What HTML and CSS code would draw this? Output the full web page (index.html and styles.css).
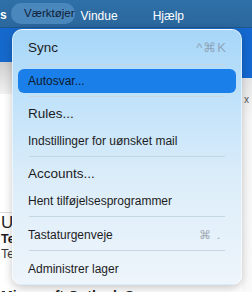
FILE: index.html
```html
<!DOCTYPE html>
<html lang="da">
<head>
    <meta charset="UTF-8">
    <meta name="viewport" content="width=device-width, initial-scale=1.0">
    <title>Værktøjer</title>
    <link rel="stylesheet" href="styles.css">
</head>
<body>
    <div class="app">
        <div class="menubar">
            <span class="mb-item mb-cut">s</span>
            <span class="mb-item mb-active">Værktøjer</span>
            <span class="mb-item mb-window">Vindue</span>
            <span class="mb-item mb-help">Hjælp</span>
        </div>
        <div class="panes">
            <div class="list-pane">
                <div class="list-head"></div>
                <div class="list-tools"></div>
                <div class="list-body">
                    <div class="msg">
                        <div class="msg-group">U</div>
                        <div class="msg-from">Te</div>
                        <div class="msg-subject">Te</div>
                    </div>
                    <div class="msg msg-last">
                        <div class="msg-from">Microsoft Outlook S</div>
                    </div>
                </div>
            </div>
            <div class="read-pane">
                <div class="read-head"></div>
                <div class="read-body">
                    <span class="read-close">x</span>
                </div>
            </div>
        </div>
    </div>

    <div class="menu">
        <div class="item en">Sync <span class="key">^⌘K</span></div>
        <div class="sep"></div>
        <div class="item da selected">Autosvar...</div>
        <div class="sep"></div>
        <div class="item en">Rules...</div>
        <div class="item da">Indstillinger for uønsket mail</div>
        <div class="sep"></div>
        <div class="item en">Accounts...</div>
        <div class="item da">Hent tilføjelsesprogrammer</div>
        <div class="sep"></div>
        <div class="item da">Tastaturgenveje <span class="key key-short">⌘ .</span></div>
        <div class="sep"></div>
        <div class="item da">Administrer lager</div>
    </div>
</body>
</html>
```

FILE: styles.css
```css
html {
    overflow: hidden;
}
body {
    margin: 0;
    padding: 0;
    width: 252px;
    height: 292px;
    overflow: hidden;
    font-family: "Liberation Sans", Arial, sans-serif;
    background-color: #f4f4f4;
}
.app {
    display: flex;
    flex-direction: column;
    height: 292px;
    overflow: hidden;
}
.menubar {
    height: 28px;
    flex-shrink: 0;
    background: linear-gradient(#2f70a8, #2a679d);
    border-bottom: 1px solid #21578a;
    box-sizing: border-box;
    display: flex;
    align-items: center;
    color: white;
    font-size: 12px;
    white-space: nowrap;
}
.mb-item {
    line-height: 20px;
    padding-top: 4px;
}
.mb-cut {
    width: 11px;
    font-weight: bold;
    padding-top: 2px;
}
.mb-active {
    background-color: #4a87bd;
    color: #0e2136;
    font-size: 11.5px;
    border-radius: 10px;
    padding: 0 1px 0 13px;
    height: 21px;
    line-height: 21px;
}
.mb-window {
    margin-left: 5px;
}
.mb-help {
    margin-left: 35px;
}
.panes {
    flex: 1;
    display: flex;
    min-height: 0;
}
.list-pane {
    width: 242px;
    display: flex;
    flex-direction: column;
    background-color: white;
}
.list-head {
    height: 34px;
    background-color: #1669cc;
}
.list-tools {
    height: 32px;
    background: linear-gradient(#cfcfcf, #f2f2f2);
}
.list-body {
    flex: 1;
    min-height: 0;
    overflow: hidden;
    background-color: white;
    padding-top: 118px;
}
.msg {
    border-top: 1px solid #dcdcdc;
    padding: 1px 0 0 1px;
    height: 64px;
    color: #1d1d1d;
}
.msg-group {
    font-size: 17px;
    line-height: 18px;
}
.msg-from {
    font-size: 12.5px;
    font-weight: bold;
    line-height: 15px;
}
.msg-subject {
    font-size: 12.5px;
    line-height: 15px;
    color: #3a3a3a;
}
.msg-last {
    border-top: none;
    padding-top: 10px;
}
.msg-last .msg-from {
    font-size: 14px;
    line-height: 16px;
}
.read-pane {
    flex: 1;
    display: flex;
    flex-direction: column;
}
.read-head {
    height: 50px;
    background-color: #1468d0;
}
.read-body {
    flex: 1;
    background: linear-gradient(#e6e6e6, #f6f6f6 40px, #fafafa);
    position: relative;
}
.read-close {
    position: absolute;
    left: 2px;
    top: 16px;
    font-size: 10px;
    color: #555;
}
.menu {
    position: absolute;
    left: 12px;
    top: 29px;
    width: 230px;
    height: 256px;
    box-sizing: border-box;
    padding: 5px 5px 3px;
    border-radius: 10px;
    background: linear-gradient(#a6d6f8 0%, #c3e3fa 30%, #dcedf9 60%, #eef5fb 100%);
    border: 1px solid rgba(255, 255, 255, 0.55);
    box-shadow: 0 3px 10px rgba(0, 0, 0, 0.22);
    color: #1c1c1e;
}
.item {
    height: 26px;
    line-height: 26px;
    padding: 0 9px 0 10px;
    display: flex;
    justify-content: space-between;
    white-space: nowrap;
}
.item.en {
    font-size: 13.5px;
}
.item.da {
    font-size: 12px;
    line-height: 28px;
}
.item.selected {
    background-color: #1b7fe9;
    color: #0b1a2e;
    border-radius: 6px;
    height: 24px;
    line-height: 25px;
    margin: 1px 0;
}
.key {
    color: #8ea6bb;
    font-size: 13px;
    letter-spacing: 1px;
}
.key-short {
    color: #a2aab3;
    margin-right: 6px;
    font-size: 12px;
}
.sep {
    height: 1px;
    margin: 3px 11px 4px;
    background-color: #c6d6e2;
}
```
